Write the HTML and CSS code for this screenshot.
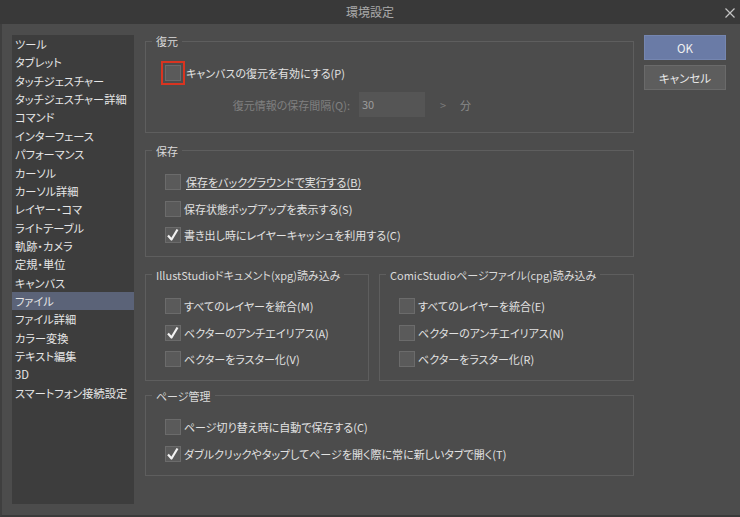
FILE: index.html
```html
<!DOCTYPE html>
<html lang="ja">
<head>
<meta charset="utf-8">
<title>環境設定</title>
<link rel="stylesheet" href="styles.css">
</head>
<body>
<div class="window">
  <header class="titlebar">
    <span class="title">環境設定</span>
    <svg class="close" width="10" height="10" viewBox="0 0 10 10"><path d="M0.5 0.5 L9.5 9.5 M9.5 0.5 L0.5 9.5" stroke="#c4c4c4" stroke-width="1.2" fill="none"/></svg>
  </header>
  <div class="panel">
    <nav class="sidebar">
      <ul class="nav">
        <li>ツール</li>
        <li>タブレット</li>
        <li>タッチジェスチャー</li>
        <li>タッチジェスチャー詳細</li>
        <li>コマンド</li>
        <li>インターフェース</li>
        <li>パフォーマンス</li>
        <li>カーソル</li>
        <li>カーソル詳細</li>
        <li>レイヤー・コマ</li>
        <li>ライトテーブル</li>
        <li>軌跡・カメラ</li>
        <li>定規・単位</li>
        <li>キャンバス</li>
        <li class="selected">ファイル</li>
        <li>ファイル詳細</li>
        <li>カラー変換</li>
        <li>テキスト編集</li>
        <li>3D</li>
        <li>スマートフォン接続設定</li>
      </ul>
    </nav>
    <main class="content">
      <fieldset class="group g-restore">
        <legend>復元</legend>
        <div class="rows">
          <div class="row">
            <span class="box focused"></span>
            <span class="label wide">キャンバスの復元を有効にする(P)</span>
          </div>
          <div class="row interval">
            <span class="dim-label">復元情報の保存間隔(Q):</span>
            <span class="input">30</span>
            <span class="arrow">&gt;</span>
            <span class="unit">分</span>
          </div>
        </div>
      </fieldset>

      <fieldset class="group g-save">
        <legend>保存</legend>
        <div class="rows">
          <div class="row"><span class="box"></span><span class="label under">保存をバックグラウンドで実行する(B)</span></div>
          <div class="row"><span class="box"></span><span class="label">保存状態ポップアップを表示する(S)</span></div>
          <div class="row"><span class="box"><svg viewBox="0 0 16 16"><polyline points="3,8.5 6.5,12.5 12.5,2.5" fill="none" stroke="#f2f2f2" stroke-width="2.2" stroke-linejoin="round"/></svg></span><span class="label">書き出し時にレイヤーキャッシュを利用する(C)</span></div>
        </div>
      </fieldset>

      <div class="pair">
        <fieldset class="group g-illust">
          <legend>IllustStudioドキュメント(xpg)読み込み</legend>
          <div class="rows">
            <div class="row"><span class="box"></span><span class="label">すべてのレイヤーを統合(M)</span></div>
            <div class="row"><span class="box"><svg viewBox="0 0 16 16"><polyline points="3,8.5 6.5,12.5 12.5,2.5" fill="none" stroke="#f2f2f2" stroke-width="2.2" stroke-linejoin="round"/></svg></span><span class="label">ベクターのアンチエイリアス(A)</span></div>
            <div class="row"><span class="box"></span><span class="label">ベクターをラスター化(V)</span></div>
          </div>
        </fieldset>
        <fieldset class="group g-comic">
          <legend>ComicStudioページファイル(cpg)読み込み</legend>
          <div class="rows">
            <div class="row"><span class="box"></span><span class="label">すべてのレイヤーを統合(E)</span></div>
            <div class="row"><span class="box"></span><span class="label">ベクターのアンチエイリアス(N)</span></div>
            <div class="row"><span class="box"></span><span class="label">ベクターをラスター化(R)</span></div>
          </div>
        </fieldset>
      </div>

      <fieldset class="group g-page">
        <legend>ページ管理</legend>
        <div class="rows">
          <div class="row"><span class="box"></span><span class="label">ページ切り替え時に自動で保存する(C)</span></div>
          <div class="row"><span class="box"><svg viewBox="0 0 16 16"><polyline points="3,8.5 6.5,12.5 12.5,2.5" fill="none" stroke="#f2f2f2" stroke-width="2.2" stroke-linejoin="round"/></svg></span><span class="label">ダブルクリックやタップしてページを開く際に常に新しいタブで開く(T)</span></div>
        </div>
      </fieldset>
    </main>
    <div class="actions">
      <button class="btn primary">OK</button>
      <button class="btn">キャンセル</button>
    </div>
  </div>
</div>
</body>
</html>
```

FILE: styles.css
```css
* { box-sizing: border-box; }
html, body {
  margin: 0;
  padding: 0;
  width: 740px;
  height: 517px;
  overflow: hidden;
  background: #4c4c4c;
}
body {
  font-family: "Noto Sans CJK JP", "Noto Sans", sans-serif;
  font-size: 11px;
  font-feature-settings: "palt";
  color: #e2e2e2;
}
.window {
  display: flex;
  flex-direction: column;
  width: 740px;
  height: 517px;
}
.titlebar {
  height: 24px;
  flex: 0 0 24px;
  background: #393939;
  display: flex;
  align-items: center;
  justify-content: center;
  position: relative;
}
.title {
  color: #a9a9a9;
  font-size: 12px;
  line-height: 24px;
  font-feature-settings: normal;
}
.close {
  position: absolute;
  right: 5px;
  top: 8px;
}
.panel {
  flex: 1;
  display: flex;
  align-items: flex-start;
  padding: 11px 0 0 10px;
  border-left: 2px solid #3f3f3f;
  border-bottom: 2px solid #3a3a3a;
  background: #4c4c4c;
}
.sidebar {
  width: 122px;
  height: 469px;
  background: #3d3d3d;
  flex: 0 0 122px;
}
.nav {
  list-style: none;
  margin: 0;
  padding: 0;
  font-size: 11.2px;
}
.nav li {
  height: 18.37px;
  line-height: 18.37px;
  padding-left: 3px;
  color: #e6e6e6;
  white-space: nowrap;
}
.nav li.selected {
  background: #5b6378;
}
.content {
  width: 489px;
  margin-left: 11px;
  display: flex;
  flex-direction: column;
}
.group {
  margin: 0;
  padding: 0;
  border: 1px solid #5e5e5e;
  min-width: 0;
}
.group legend {
  margin-left: 6px;
  padding: 0 4px;
  line-height: 12px;
  height: 12px;
  font-size: 11px;
  color: #dadada;
  white-space: nowrap;
}
.rows {
  display: flex;
  flex-direction: column;
  gap: 10.5px;
  padding: 17.5px 8px 13px 19px;
}
.row {
  display: flex;
  align-items: center;
  height: 16px;
  white-space: nowrap;
}
.box {
  width: 16px;
  height: 16px;
  flex: 0 0 16px;
  background: #5a5a5a;
  border: 1px solid #6b6b6b;
  display: flex;
  align-items: center;
  justify-content: center;
}
.box svg {
  width: 16px;
  height: 16px;
  margin: -1px;
}
.box.focused {
  outline: 2px solid #d93420;
  outline-offset: 2px;
}
.label {
  margin-left: 3px;
  color: #e2e2e2;
}
.label.wide { margin-left: 5px; }
.label.under {
  margin-left: 5px;
  text-decoration: underline;
  text-underline-offset: 2px;
}
.g-restore .rows { padding-top: 18px; padding-bottom: 15px; }
.row.interval {
  height: 25px;
  margin-top: 0.5px;
}
.dim-label {
  width: 185px;
  text-align: right;
  color: #808080;
}
.input {
  width: 66px;
  height: 25px;
  margin-left: 9px;
  background: #555555;
  color: #9c9c9c;
  padding-left: 3px;
  line-height: 25px;
}
.arrow {
  margin-left: 15px;
  color: #7a7a7a;
}
.unit {
  margin-left: 14px;
  color: #8a8a8a;
}
.g-save { margin-top: 11.5px; }
.pair {
  display: flex;
  gap: 10px;
  margin-top: 11.5px;
}
.g-illust { flex: 0 0 224px; }
.g-comic { flex: 1; }
.g-page { margin-top: 8.5px; }
.actions {
  margin-left: 10px;
  width: 82px;
  display: flex;
  flex-direction: column;
  gap: 5px;
}
.btn {
  width: 82px;
  height: 25px;
  font-family: "Noto Sans CJK JP", "Noto Sans", sans-serif;
  font-size: 11.5px;
  font-feature-settings: "palt";
  color: #e8e8e8;
  background: #5d5d5d;
  border: 1px solid #6a6a6a;
  padding: 0;
}
.btn.primary {
  background: #6a7ba6;
  border-color: #7586b0;
  color: #f0f0f0;
}
```
